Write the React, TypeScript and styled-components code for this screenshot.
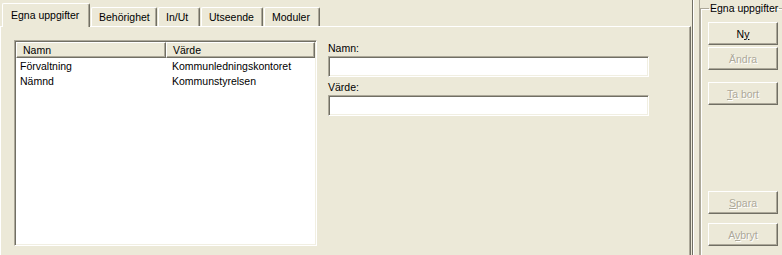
import { FC } from "react";
import styled, { createGlobalStyle } from "styled-components";

const colors = {
  face: "#ECE9D8",
  light: "#FFFFFF",
  shadow: "#ACA899",
  dark: "#716F64",
  text: "#000000",
  disabled: "#ACA899",
};

const GlobalStyle = createGlobalStyle`
  html, body {
    margin: 0;
    padding: 0;
    background: ${colors.face};
    font-family: "Liberation Sans", Arial, sans-serif;
    font-size: 10.5px;
    color: ${colors.text};
  }
`;

const tabs = [
  { label: "Egna uppgifter", width: 88, active: true },
  { label: "Behörighet", width: 66 },
  { label: "In/Ut", width: 42 },
  { label: "Utseende", width: 62 },
  { label: "Moduler", width: 56 },
];

const rows = [
  { name: "Förvaltning", value: "Kommunledningskontoret" },
  { name: "Nämnd", value: "Kommunstyrelsen" },
];

const App: FC = () => {
  return (
    <>
      <GlobalStyle />
      <Window>
        <TabArea>
          <TabStrip>
            {tabs.map((t) => (
              <Tab key={t.label} $width={t.width} $active={!!t.active}>
                {t.label}
              </Tab>
            ))}
          </TabStrip>
          <Panel>
            <ListView>
              <HeaderRow>
                <HeaderCell $width={150}>Namn</HeaderCell>
                <HeaderCell $width={149}>Värde</HeaderCell>
              </HeaderRow>
              {rows.map((r) => (
                <Row key={r.name}>
                  <NameCell>{r.name}</NameCell>
                  <ValueCell>{r.value}</ValueCell>
                </Row>
              ))}
            </ListView>
            <Form>
              <Label>Namn:</Label>
              <Input />
              <Label $top={4}>Värde:</Label>
              <Input />
            </Form>
          </Panel>
        </TabArea>
        <Splitter />
        <SidePanel>
          <GroupBox>
            <Legend>Egna uppgifter</Legend>
            <Button $top={7}>
              N<u>y</u>
            </Button>
            <Button $top={2} disabled>
              Ändra
            </Button>
            <Button $top={12} disabled>
              <u>T</u>a bort
            </Button>
            <Button $top={86} disabled>
              <u>S</u>para
            </Button>
            <Button $top={9} disabled>
              A<u>v</u>bryt
            </Button>
          </GroupBox>
        </SidePanel>
      </Window>
    </>
  );
};

export default App;

const Window = styled.div`
  display: flex;
  height: 255px;
  width: 782px;
  overflow: hidden;
`;

const TabArea = styled.div`
  width: 691px;
  display: flex;
  flex-direction: column;
`;

const TabStrip = styled.div`
  display: flex;
  align-items: flex-end;
  height: 27px;
  padding-left: 2px;
  position: relative;
  z-index: 1;
  margin-bottom: -1px;
`;

const Tab = styled.div<{ $width: number; $active: boolean }>`
  box-sizing: border-box;
  width: ${(p) => p.$width}px;
  height: ${(p) => (p.$active ? 24 : 19)}px;
  padding-top: ${(p) => (p.$active ? 5 : 3)}px;
  padding-left: ${(p) => (p.$active ? 8 : 7)}px;
  margin-right: 1px;
  line-height: 13px;
  white-space: nowrap;
  background: ${colors.face};
  border-top: 1px solid ${colors.light};
  border-left: 1px solid ${colors.light};
  border-right: 1px solid ${colors.dark};
  border-radius: 2px 2px 0 0;
  box-shadow: inset -1px 0 0 ${colors.shadow};
  margin-bottom: ${(p) => (p.$active ? 0 : 1)}px;
`;

const Panel = styled.div`
  flex: 1;
  display: flex;
  align-items: flex-start;
  padding: 13px 0 0 13px;
  border-top: 1px solid ${colors.light};
  border-left: 1px solid ${colors.light};
  border-right: 1px solid ${colors.dark};
  box-shadow: inset -1px 0 0 ${colors.shadow};
`;

const ListView = styled.div`
  box-sizing: border-box;
  width: 303px;
  height: 206px;
  background: #fff;
  border-top: 1px solid ${colors.shadow};
  border-left: 1px solid ${colors.shadow};
  border-right: 1px solid ${colors.light};
  border-bottom: 1px solid ${colors.light};
  box-shadow: inset 1px 1px 0 ${colors.dark}, inset -1px -1px 0 #f1efe2;
  padding: 1px 1px 0 1px;
`;

const HeaderRow = styled.div`
  display: flex;
  height: 16px;
`;

const HeaderCell = styled.div<{ $width: number }>`
  box-sizing: border-box;
  width: ${(p) => p.$width}px;
  height: 16px;
  padding: 1px 0 0 6px;
  line-height: 13px;
  background: ${colors.face};
  border-top: 1px solid ${colors.light};
  border-left: 1px solid ${colors.light};
  border-right: 1px solid ${colors.dark};
  border-bottom: 1px solid ${colors.dark};
  box-shadow: inset -1px -1px 0 ${colors.shadow};
`;

const Row = styled.div`
  display: flex;
  height: 14px;
  line-height: 14px;
  margin-top: 1px;
`;

const NameCell = styled.div`
  width: 150px;
  padding-left: 4px;
  box-sizing: border-box;
`;

const ValueCell = styled.div`
  padding-left: 6px;
  white-space: nowrap;
`;

const Form = styled.div`
  display: flex;
  flex-direction: column;
  margin-left: 11px;
  margin-top: 2px;
  width: 321px;
`;

const Label = styled.div<{ $top?: number }>`
  line-height: 13px;
  margin-top: ${(p) => p.$top ?? 0}px;
  margin-bottom: 1px;
`;

const Input = styled.input`
  box-sizing: border-box;
  width: 321px;
  height: 21px;
  margin: 0;
  padding: 2px 3px;
  font: inherit;
  background: #fff;
  border-top: 1px solid ${colors.shadow};
  border-left: 1px solid ${colors.shadow};
  border-right: 1px solid ${colors.light};
  border-bottom: 1px solid ${colors.light};
  box-shadow: inset 1px 1px 0 ${colors.dark}, inset -1px -1px 0 #f1efe2;
  outline: none;
`;

const Splitter = styled.div`
  box-sizing: border-box;
  width: 8px;
  margin-left: 1px;
  border-left: 1px solid ${colors.dark};
  border-right: 1px solid ${colors.shadow};
  box-shadow: inset 1px 0 0 ${colors.light};
  flex-shrink: 0;
`;

const SidePanel = styled.div`
  flex: 1;
  padding-top: 2px;
  overflow: hidden;
`;

const GroupBox = styled.fieldset`
  box-sizing: border-box;
  margin: 0;
  width: 120px;
  height: 300px;
  padding: 0 0 0 7px;
  border: none;
  border-top: 1px solid ${colors.shadow};
  border-left: 1px solid ${colors.shadow};
  box-shadow: inset 1px 1px 0 ${colors.light};
  display: flex;
  flex-direction: column;
  align-items: flex-start;
`;

const Legend = styled.legend`
  padding: 0 1px;
  margin-left: 1px;
  line-height: 13px;
  white-space: nowrap;
`;

const Button = styled.button<{ $top: number }>`
  box-sizing: border-box;
  width: 70px;
  height: 23px;
  margin: ${(p) => p.$top}px 0 0 0;
  padding: 0;
  font: inherit;
  color: ${colors.text};
  background: ${colors.face};
  border-top: 1px solid ${colors.light};
  border-left: 1px solid ${colors.light};
  border-right: 1px solid ${colors.dark};
  border-bottom: 1px solid ${colors.dark};
  box-shadow: inset -1px -1px 0 ${colors.shadow};
  border-radius: 0;
  flex-shrink: 0;

  &:disabled {
    color: ${colors.disabled};
    text-shadow: 1px 1px 0 ${colors.light};
  }
`;
